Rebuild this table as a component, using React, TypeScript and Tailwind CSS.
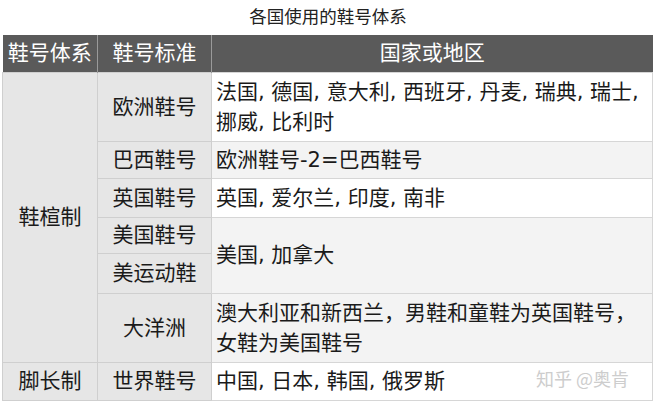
import React from "react";

const font = { fontFamily: '"DejaVu Sans", "Noto Sans CJK SC", sans-serif' };

export default function App() {
  const side = "bg-[#e6e6e6] text-center align-middle border border-[#cfcfcf]";
  const body = "text-left align-middle border border-[#d6d6d6] pl-[4px] pr-[2px]";
  return (
    <div
      className="relative w-[656px] h-[403px] bg-white text-[#1a1a1a] overflow-hidden"
      style={font}
    >
      <div className="h-[35px] flex items-center justify-center text-[17.5px] text-[#222]">
        各国使用的鞋号体系
      </div>
      <table className="ml-[2px] w-[651px] border-collapse table-fixed text-[21px] leading-[30px]">
        <colgroup>
          <col className="w-[95px]" />
          <col className="w-[114px]" />
          <col />
        </colgroup>
        <thead>
          <tr className="h-[37px] bg-[#5a5a5a] text-white">
            <th className="font-normal text-center border-r border-[#9a9a9a]">鞋号体系</th>
            <th className="font-normal text-center border-r border-[#9a9a9a]">鞋号标准</th>
            <th className="font-normal text-center">国家或地区</th>
          </tr>
        </thead>
        <tbody>
          <tr className="h-[69px]">
            <td rowSpan={6} className={side}>鞋楦制</td>
            <td className={side}>欧洲鞋号</td>
            <td className={body + " bg-white"}>
              法国, 德国, 意大利, 西班牙, 丹麦, 瑞典, 瑞士, 挪威, 比利时
            </td>
          </tr>
          <tr className="h-[37px]">
            <td className={side}>巴西鞋号</td>
            <td className={body + " bg-[#f3f3f3]"}>欧洲鞋号-2=巴西鞋号</td>
          </tr>
          <tr className="h-[39px]">
            <td className={side}>英国鞋号</td>
            <td className={body + " bg-white"}>英国, 爱尔兰, 印度, 南非</td>
          </tr>
          <tr className="h-[36px]">
            <td className={side}>美国鞋号</td>
            <td rowSpan={2} className={body + " bg-[#f3f3f3]"}>美国, 加拿大</td>
          </tr>
          <tr className="h-[40px]">
            <td className={side}>美运动鞋</td>
          </tr>
          <tr className="h-[69px]">
            <td className={side}>大洋洲</td>
            <td className={body + " bg-[#f3f3f3]"}>
              澳大利亚和新西兰，男鞋和童鞋为英国鞋号，女鞋为美国鞋号
            </td>
          </tr>
          <tr className="h-[38px]">
            <td className={side}>脚长制</td>
            <td className={side}>世界鞋号</td>
            <td className={body + " bg-white"}>中国, 日本, 韩国, 俄罗斯</td>
          </tr>
        </tbody>
      </table>
      <div
        className="absolute left-[536px] top-[366px] text-[18px] leading-[24px] text-[#cdcdcd] whitespace-nowrap"
        style={{ fontFamily: '"Noto Sans CJK SC", sans-serif' }}
      >
        知乎 @奥肯
      </div>
    </div>
  );
}
